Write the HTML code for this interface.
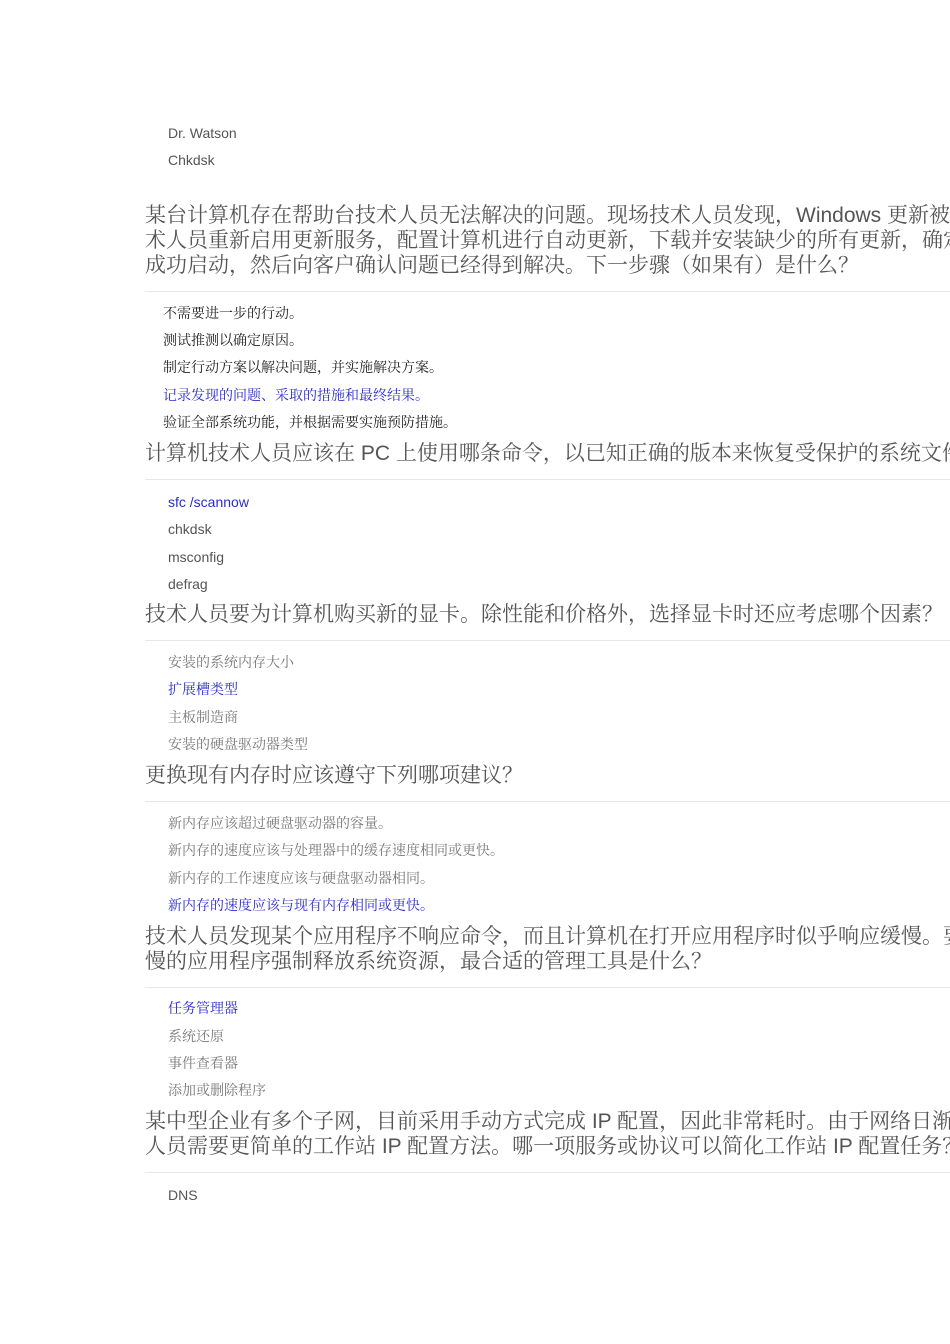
<html><head><style>
html,body{margin:0;width:950px;height:1344px;overflow:hidden}
body{background:#fff;position:relative}
div{position:absolute;white-space:nowrap}
.h{left:145px;font:21px/25px "Liberation Sans","Noto Serif CJK SC",serif;color:#555}
.hr{left:145px;width:805px;height:1px;background:#e8e8e8}
.o{left:163px;font:14px/20px "Liberation Serif","Noto Serif CJK SC",serif;color:#222}
.g{left:168px;color:#777}
.l{left:168px;font:14px/20px "Liberation Sans","Noto Sans CJK SC",sans-serif;color:#555}
.b{color:#2a2ad0}
</style></head><body>
<div class="l" style="top:123px">Dr. Watson</div>
<div class="l" style="top:150px">Chkdsk</div>
<div class="h" style="top:203px">某台计算机存在帮助台技术人员无法解决的问题。现场技术人员发现，Windows 更新被禁用。技<br>术人员重新启用更新服务，配置计算机进行自动更新，下载并安装缺少的所有更新，确定计算机<br>成功启动，然后向客户确认问题已经得到解决。下一步骤（如果有）是什么？</div>
<div class="hr" style="top:291px"></div>
<div class="o" style="top:305px">不需要进一步的行动。</div>
<div class="o" style="top:332px">测试推测以确定原因。</div>
<div class="o" style="top:359px">制定行动方案以解决问题，并实施解决方案。</div>
<div class="o b" style="top:387px">记录发现的问题、采取的措施和最终结果。</div>
<div class="o" style="top:414px">验证全部系统功能，并根据需要实施预防措施。</div>
<div class="h" style="top:441px">计算机技术人员应该在 PC 上使用哪条命令，以已知正确的版本来恢复受保护的系统文件？</div>
<div class="hr" style="top:479px"></div>
<div class="l b" style="top:492px">sfc /scannow</div>
<div class="l" style="top:519px">chkdsk</div>
<div class="l" style="top:547px">msconfig</div>
<div class="l" style="top:574px">defrag</div>
<div class="h" style="top:602px">技术人员要为计算机购买新的显卡。除性能和价格外，选择显卡时还应考虑哪个因素？</div>
<div class="hr" style="top:640px"></div>
<div class="o g" style="top:654px">安装的系统内存大小</div>
<div class="o g b" style="top:681px">扩展槽类型</div>
<div class="o g" style="top:709px">主板制造商</div>
<div class="o g" style="top:736px">安装的硬盘驱动器类型</div>
<div class="h" style="top:763px">更换现有内存时应该遵守下列哪项建议？</div>
<div class="hr" style="top:801px"></div>
<div class="o g" style="top:815px">新内存应该超过硬盘驱动器的容量。</div>
<div class="o g" style="top:842px">新内存的速度应该与处理器中的缓存速度相同或更快。</div>
<div class="o g" style="top:870px">新内存的工作速度应该与硬盘驱动器相同。</div>
<div class="o g b" style="top:897px">新内存的速度应该与现有内存相同或更快。</div>
<div class="h" style="top:924px">技术人员发现某个应用程序不响应命令，而且计算机在打开应用程序时似乎响应缓慢。要从响应缓<br>慢的应用程序强制释放系统资源，最合适的管理工具是什么？</div>
<div class="hr" style="top:987px"></div>
<div class="o g b" style="top:1000px">任务管理器</div>
<div class="o g" style="top:1028px">系统还原</div>
<div class="o g" style="top:1055px">事件查看器</div>
<div class="o g" style="top:1082px">添加或删除程序</div>
<div class="h" style="top:1109px">某中型企业有多个子网，目前采用手动方式完成 IP 配置，因此非常耗时。由于网络日渐扩大，技术<br>人员需要更简单的工作站 IP 配置方法。哪一项服务或协议可以简化工作站 IP 配置任务？</div>
<div class="hr" style="top:1172px"></div>
<div class="l" style="top:1185px">DNS</div>
</body></html>
